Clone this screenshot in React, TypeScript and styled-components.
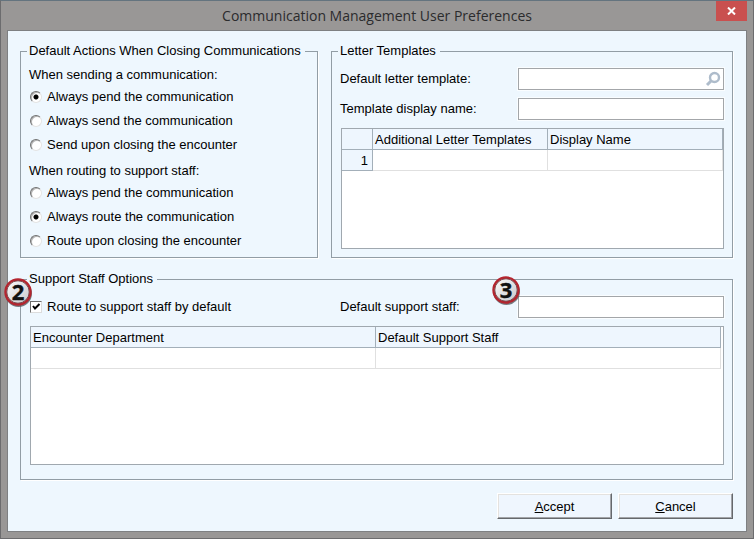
import React from "react";
import styled, { createGlobalStyle } from "styled-components";

const GlobalStyle = createGlobalStyle`
  * { box-sizing: border-box; }
  body { margin: 0; background: #999694; }
  body, button, input, table { font-family: "Liberation Sans", Arial, sans-serif; font-size: 13px; line-height: 16px; color: #000; }
`;

const Frame = styled.div`
  display: flex;
  flex-direction: column;
  min-height: 100vh;
  padding: 0 6px 6px;
  border: 1px solid #6c6c6e;
  border-top-color: #64747f;
  background: #999796;
`;

const TitleBar = styled.header`
  position: relative;
  display: flex;
  justify-content: center;
  height: 29px;
`;

const Title = styled.h1`
  margin: 0;
  font: 400 14px/29px "Open Sans", "Segoe UI", sans-serif;
  color: #2b2b2d;
`;

const CloseButton = styled.button`
  position: absolute;
  top: 0;
  right: 0;
  display: grid;
  place-items: center;
  width: 31px;
  height: 20px;
  padding: 0;
  border: 0;
  background: #c9504f;
`;

const Client = styled.main`
  flex: 1;
  display: flex;
  flex-direction: column;
  gap: 13px;
  padding: 12px 13px 12px 12px;
  border: 1px solid #7e8082;
  background: #eef7fe;
`;

const TopRow = styled.div`
  display: grid;
  grid-template-columns: 298fr 402fr;
  gap: 13px;
`;

const Group = styled.fieldset`
  display: flex;
  flex-direction: column;
  min-width: 0;
  margin: 0;
  padding: 0 8px;
  border: 1px solid #929da5;
  box-shadow: 1px 1px 0 #fff;
`;

const Legend = styled.legend`
  margin-left: -2px;
  padding: 0 4px 0 2px;
`;

const Choices = styled.div`
  display: flex;
  flex-direction: column;
  padding: 6px 0 4px;
`;

const Question = styled.div`
  line-height: 20px;
  &:not(:first-child) { margin-top: 4px; }
`;

const Option = styled.label`
  display: flex;
  align-items: center;
  gap: 5px;
  height: 24px;
`;

const Radio = styled.input.attrs({ type: "radio" })`
  appearance: none;
  width: 12px;
  height: 12px;
  margin: 0 0 0 1px;
  border: 1px solid;
  border-color: #707070 #e4e4e4 #e4e4e4 #707070;
  border-radius: 50%;
  background: #fff;
  box-shadow: inset 1px 1px 0 #b4b4b4;
  &:checked { background: radial-gradient(circle, #000 2px, #fff 3px); }
`;

const CheckBox = styled.span`
  display: grid;
  width: 12px;
  height: 12px;
  margin-left: 1px;
  & > * { grid-area: 1 / 1; }
  svg { visibility: hidden; pointer-events: none; }
  input:checked + svg { visibility: visible; }
`;

const Check = styled.input.attrs({ type: "checkbox" })`
  appearance: none;
  width: 12px;
  height: 12px;
  margin: 0;
  border: 1px solid;
  border-color: #6e6e6e #dcdcdc #dcdcdc #6e6e6e;
  background: #fff;
`;

const Fields = styled.div`
  display: grid;
  grid-template-columns: 178px 1fr;
  align-items: center;
  row-gap: 8px;
  padding: 9px 0 8px;
`;

const TextField = styled.div`
  position: relative;
  display: flex;
  svg { position: absolute; top: 3px; right: 3px; }
`;

const TextInput = styled.input`
  width: 100%;
  height: 22px;
  padding: 2px 4px;
  border: 1px solid #a3a6a9;
  background: #fff;
  box-shadow: 0 0 0 1px #fafdff;
`;

const Panel = styled.div<{ $min: number; $gap: number }>`
  flex: 1 0 auto;
  min-height: ${(p) => p.$min}px;
  margin: 0 0 ${(p) => p.$gap}px 1px;
  border: 1px solid #a0a8af;
  background: #fff;
`;

const Grid = styled.table<{ $inset?: boolean }>`
  width: ${(p) => (p.$inset ? "calc(100% - 2px)" : "100%")};
  table-layout: fixed;
  border-collapse: separate;
  border-spacing: 0;
  th, td {
    height: 21px;
    padding: 2px 2px 0;
    border: 0 solid #a3afb9;
    border-width: 0 1px 1px 0;
    font-weight: 400;
    text-align: left;
    white-space: nowrap;
  }
  th { background: #eef6fe; }
  td { border-color: #e0e0e0; }
  th:first-child:is([scope="row"], .corner) {
    width: 31px;
    padding-right: 4px;
    text-align: right;
  }
`;

const StaffRow = styled.div`
  display: grid;
  grid-template-columns: 311fr 178px 206px;
  align-items: center;
  padding: 8px 0 7px;
`;

const Buttons = styled.footer`
  display: flex;
  justify-content: flex-end;
  gap: 6px;
`;

const PushButton = styled.button`
  width: 115px;
  height: 26px;
  padding: 1px 0 0;
  border: 1px solid;
  border-color: #fff #65686c #65686c #fff;
  background: #eff6fe;
  box-shadow: inset -1px -1px 0 #a2a4a8, inset 1px 1px 0 #e4e2df;
`;

const Anchor = styled.div`
  position: relative;
`;

const Marker = styled.svg<{ $left: number; $top: number }>`
  position: absolute;
  left: ${(p) => p.$left}px;
  top: ${(p) => p.$top}px;
  pointer-events: none;
`;

const Step = ({ n, left, top }: { n: number; left: number; top: number }) => (
  <Marker $left={left} $top={top} width="32" height="32" viewBox="0 0 32 32">
    <defs>
      <linearGradient id={`face${n}`} x1="0" y1="0" x2="1" y2="1">
        <stop offset="0" stopColor="#ffffff" />
        <stop offset="1" stopColor="#c4c4c8" />
      </linearGradient>
    </defs>
    <circle cx="15.5" cy="16.5" r="13.5" fill="#555b60" opacity="0.8" />
    <circle cx="15" cy="15" r="12.5" fill={`url(#face${n})`} stroke="#b4252f" strokeWidth="2.4" />
    <circle cx="15" cy="15" r="11.2" fill="none" stroke="#6a3438" strokeWidth="0.8" />
    <text x="15" y="22.5" textAnchor="middle" fontFamily="Open Sans, sans-serif" fontWeight="700" fontSize="22" fill="#111" stroke="#111" strokeWidth="0.4">{n}</text>
  </Marker>
);

const routes = [
  { name: "sending", question: "When sending a communication:", options: ["Always pend the communication", "Always send the communication", "Send upon closing the encounter"], selected: 0 },
  { name: "routing", question: "When routing to support staff:", options: ["Always pend the communication", "Always route the communication", "Route upon closing the encounter"], selected: 1 },
];

export default function App() {
  return (
    <>
      <GlobalStyle />
      <Frame>
        <TitleBar>
          <Title>Communication Management User Preferences</Title>
          <CloseButton aria-label="Close">
            <svg width="9" height="8" viewBox="0 0 9 8"><path d="M1 .5 8 7.5M8 .5 1 7.5" stroke="#fff" strokeWidth="2" /></svg>
          </CloseButton>
        </TitleBar>
        <Client>
          <TopRow>
            <Group>
              <Legend>Default Actions When Closing Communications</Legend>
              <Choices>
                {routes.map((r) => (
                  <React.Fragment key={r.name}>
                    <Question>{r.question}</Question>
                    {r.options.map((o, i) => (
                      <Option key={o}>
                        <Radio name={r.name} defaultChecked={i === r.selected} />
                        {o}
                      </Option>
                    ))}
                  </React.Fragment>
                ))}
              </Choices>
            </Group>
            <Group>
              <Legend>Letter Templates</Legend>
              <Fields>
                <label htmlFor="template">Default letter template:</label>
                <TextField>
                  <TextInput id="template" />
                  <svg width="16" height="16" viewBox="0 0 16 16" fill="none" stroke="#aebccb">
                    <circle cx="9.5" cy="6.5" r="4.5" strokeWidth="2.4" />
                    <path d="M6 10 2 14" strokeWidth="3" />
                  </svg>
                </TextField>
                <label htmlFor="display">Template display name:</label>
                <TextInput id="display" />
              </Fields>
              <Panel $min={121} $gap={8}>
                <Grid>
                  <thead><tr><th className="corner" /><th scope="col">Additional Letter Templates</th><th scope="col">Display Name</th></tr></thead>
                  <tbody><tr><th scope="row">1</th><td /><td /></tr></tbody>
                </Grid>
              </Panel>
            </Group>
          </TopRow>
          <Group>
            <Legend>Support Staff Options</Legend>
            <StaffRow>
              <Anchor>
                <Option>
                  <CheckBox>
                    <Check defaultChecked />
                    <svg width="12" height="12" viewBox="0 0 12 12"><path d="M3 5 5 7.5 9.5 3" fill="none" stroke="#000" strokeWidth="2" /></svg>
                  </CheckBox>
                  Route to support staff by default
                </Option>
                <Step n={2} left={-26} top={-18} />
              </Anchor>
              <label htmlFor="staff">Default support staff:</label>
              <Anchor>
                <TextField><TextInput id="staff" /></TextField>
                <Step n={3} left={-27} top={-21} />
              </Anchor>
            </StaffRow>
            <Panel $min={139} $gap={14}>
              <Grid $inset>
                <thead><tr><th scope="col">Encounter Department</th><th scope="col">Default Support Staff</th></tr></thead>
                <tbody><tr><td /><td /></tr></tbody>
              </Grid>
            </Panel>
          </Group>
          <Buttons>
            <PushButton><u>A</u>ccept</PushButton>
            <PushButton><u>C</u>ancel</PushButton>
          </Buttons>
        </Client>
      </Frame>
    </>
  );
}
